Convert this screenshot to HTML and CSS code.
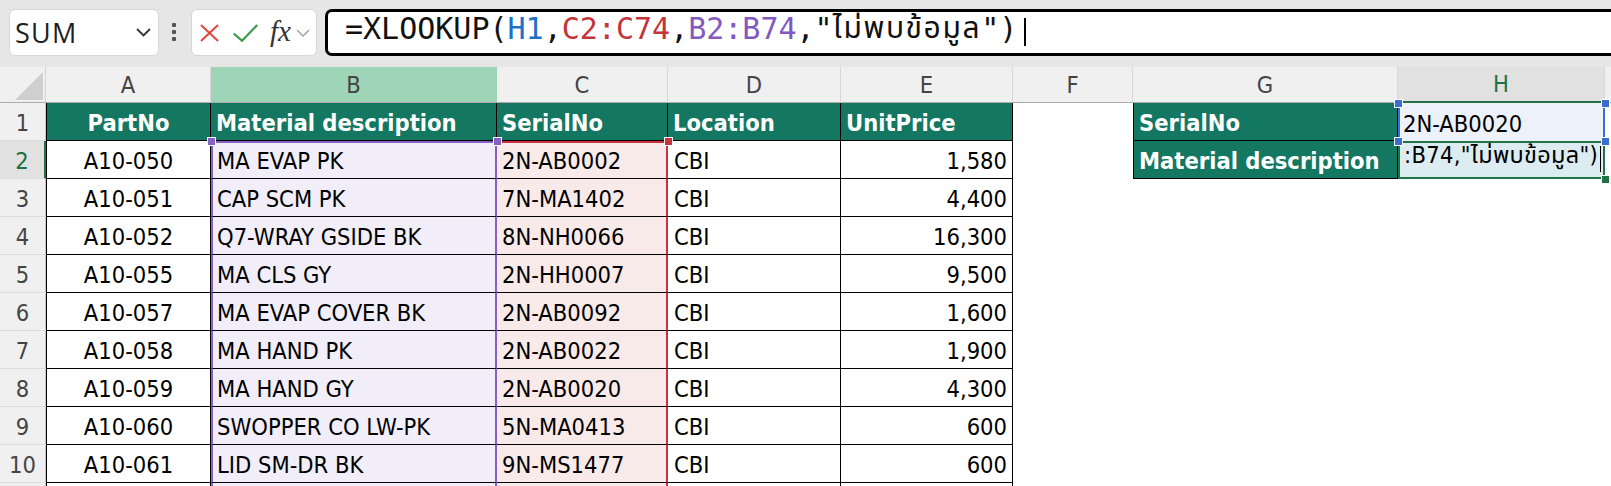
FILE: index.html
```html
<!DOCTYPE html>
<html lang="th">
<head>
<meta charset="utf-8">
<title>XLOOKUP</title>
<link rel="stylesheet" href="styles.css">
</head>
<body>
<div class="toolbar">
  <div class="namebox">
    <span class="nb-text">SUM</span>
    <svg class="nb-chev" width="15" height="9" viewBox="0 0 15 9"><polyline points="1,1 7.5,7.5 14,1" fill="none" stroke="#333" stroke-width="1.8"/></svg>
  </div>
  <div class="grip"><i></i><i></i><i></i></div>
  <div class="fxbox">
    <svg class="ic-x" width="19" height="18" viewBox="0 0 19 18"><line x1="1" y1="1" x2="18" y2="17" stroke="#e0483f" stroke-width="2"/><line x1="18" y1="1" x2="1" y2="17" stroke="#e0483f" stroke-width="2"/></svg>
    <svg class="ic-ok" width="25" height="18" viewBox="0 0 25 18"><polyline points="0.8,9.5 9,16.8 24.2,1" fill="none" stroke="#3a9b4c" stroke-width="2.2"/></svg>
    <span class="fx">fx</span>
    <svg class="fx-chev" width="14" height="8" viewBox="0 0 14 8"><polyline points="1,1 7,7 13,1" fill="none" stroke="#a3a3a3" stroke-width="1.5"/></svg>
  </div>
  <div class="formula">
    <span class="f-plain">=XLOOKUP(</span><span class="ref-h">H1</span><span class="f-plain">,</span><span class="ref-c">C2:C74</span><span class="f-plain">,</span><span class="ref-b">B2:B74</span><span class="f-plain">,"</span><span class="f-thai">ไม่พบข้อมูล</span><span class="f-plain">")</span><span class="caret"></span>
  </div>
</div>

<div class="sheet">
  <!-- column headers -->
  <div class="corner"><svg width="46" height="36" viewBox="0 0 46 36"><polygon points="43,5 43,33 15,33" fill="#cfcfcf"/></svg></div>
  <div class="ch">A</div>
  <div class="ch ch-b">B</div>
  <div class="ch">C</div>
  <div class="ch">D</div>
  <div class="ch">E</div>
  <div class="ch">F</div>
  <div class="ch">G</div>
  <div class="ch ch-act">H</div>
  <div class="ch ch-end"></div>

  <!-- row 1 -->
  <div class="rh">1</div>
  <div class="c a hd">PartNo</div>
  <div class="c hd">Material description</div>
  <div class="c hd">SerialNo</div>
  <div class="c hd">Location</div>
  <div class="c hd">UnitPrice</div>
  <div class="x"></div>
  <div class="c g hd">SerialNo</div>
  <div class="c h1">2N-AB0020</div>
  <div class="x"></div>

  <!-- row 2 -->
  <div class="rh rh-act">2</div>
  <div class="c a">A10-050</div>
  <div class="c b top">MA EVAP PK</div>
  <div class="c cc top">2N-AB0002</div>
  <div class="c d">CBI</div>
  <div class="c e">1,580</div>
  <div class="x"></div>
  <div class="c g hd">Material description</div>
  <div class="c h2"><span class="h2-text">:B74,"ไม่พบข้อมูล")</span><span class="h2-caret"></span></div>
  <div class="x"></div>

  <!-- row 3 -->
  <div class="rh">3</div>
  <div class="c a">A10-051</div>
  <div class="c b">CAP SCM PK</div>
  <div class="c cc">7N-MA1402</div>
  <div class="c d">CBI</div>
  <div class="c e">4,400</div>
  <div class="x"></div><div class="x"></div><div class="x"></div><div class="x"></div>

  <!-- row 4 -->
  <div class="rh">4</div>
  <div class="c a">A10-052</div>
  <div class="c b">Q7-WRAY GSIDE BK</div>
  <div class="c cc">8N-NH0066</div>
  <div class="c d">CBI</div>
  <div class="c e">16,300</div>
  <div class="x"></div><div class="x"></div><div class="x"></div><div class="x"></div>

  <!-- row 5 -->
  <div class="rh">5</div>
  <div class="c a">A10-055</div>
  <div class="c b">MA CLS GY</div>
  <div class="c cc">2N-HH0007</div>
  <div class="c d">CBI</div>
  <div class="c e">9,500</div>
  <div class="x"></div><div class="x"></div><div class="x"></div><div class="x"></div>

  <!-- row 6 -->
  <div class="rh">6</div>
  <div class="c a">A10-057</div>
  <div class="c b">MA EVAP COVER BK</div>
  <div class="c cc">2N-AB0092</div>
  <div class="c d">CBI</div>
  <div class="c e">1,600</div>
  <div class="x"></div><div class="x"></div><div class="x"></div><div class="x"></div>

  <!-- row 7 -->
  <div class="rh">7</div>
  <div class="c a">A10-058</div>
  <div class="c b">MA HAND PK</div>
  <div class="c cc">2N-AB0022</div>
  <div class="c d">CBI</div>
  <div class="c e">1,900</div>
  <div class="x"></div><div class="x"></div><div class="x"></div><div class="x"></div>

  <!-- row 8 -->
  <div class="rh">8</div>
  <div class="c a">A10-059</div>
  <div class="c b">MA HAND GY</div>
  <div class="c cc">2N-AB0020</div>
  <div class="c d">CBI</div>
  <div class="c e">4,300</div>
  <div class="x"></div><div class="x"></div><div class="x"></div><div class="x"></div>

  <!-- row 9 -->
  <div class="rh">9</div>
  <div class="c a">A10-060</div>
  <div class="c b">SWOPPER CO LW-PK</div>
  <div class="c cc">5N-MA0413</div>
  <div class="c d">CBI</div>
  <div class="c e">600</div>
  <div class="x"></div><div class="x"></div><div class="x"></div><div class="x"></div>

  <!-- row 10 -->
  <div class="rh">10</div>
  <div class="c a">A10-061</div>
  <div class="c b">LID SM-DR BK</div>
  <div class="c cc">9N-MS1477</div>
  <div class="c d">CBI</div>
  <div class="c e">600</div>
  <div class="x"></div><div class="x"></div><div class="x"></div><div class="x"></div>

  <!-- row 11 (only its top edge is in view) -->
  <div class="rh rh-cut"></div>
  <div class="c a cut"></div>
  <div class="c b cut"></div>
  <div class="c cc cut"></div>
  <div class="c d cut"></div>
  <div class="c e cut"></div>
  <div class="x"></div><div class="x"></div><div class="x"></div><div class="x"></div>

  <!-- selection handles (overlay) -->
  <span class="hdl hdl-p hdl-b2l"></span>
  <span class="hdl hdl-p hdl-b2r"></span>
  <span class="hdl hdl-r hdl-c2r"></span>
  <span class="hdl hdl-bl hdl-h1tl"></span>
  <span class="hdl hdl-bl hdl-h1tr"></span>
  <span class="hdl hdl-bl hdl-h1bl"></span>
  <span class="hdl hdl-bl hdl-h1br"></span>
  <span class="hdl hdl-g hdl-h2br"></span>
</div>
</body>
</html>
```

FILE: styles.css
```css
* { box-sizing: border-box; }
html, body { margin: 0; padding: 0; }
body {
  width: 1611px;
  height: 486px;
  overflow: hidden;
  background: #ffffff;
  font-family: "DejaVu Sans Condensed", "DejaVu Sans", "Noto Sans Thai", "Noto Sans", sans-serif;
  font-stretch: condensed;
}

/* ---------- toolbar ---------- */
.toolbar {
  height: 67px;
  background: #e6e6e6;
  display: flex;
  align-items: flex-start;
  padding: 9px 0 0 9px;
}
.namebox {
  width: 150px;
  height: 47px;
  background: #fff;
  border: 1px solid #d6d6d6;
  border-radius: 6px;
  display: flex;
  align-items: center;
  justify-content: space-between;
  padding: 0 7px 0 5px;
}
.nb-text {
  font-family: "Open Sans", "Noto Sans", sans-serif;
  font-stretch: normal;
  font-size: 27px;
  color: #1e1e1e;
  letter-spacing: 1.2px;
}
.grip {
  width: 4px;
  margin: 14px 15px 0 13px;
  display: flex;
  flex-direction: column;
  gap: 3px;
}
.grip i {
  display: block;
  width: 4px;
  height: 4px;
  border-radius: 1px;
  background: #555;
}
.fxbox {
  width: 126px;
  height: 47px;
  background: #fff;
  border: 1px solid #d6d6d6;
  border-radius: 6px;
  display: flex;
  align-items: center;
  padding-left: 8px;
}
.ic-x { display: block; }
.ic-ok { display: block; margin-left: 14px; }
.fx {
  margin-left: 12px;
  font-family: "Liberation Serif", serif;
  font-stretch: normal;
  font-style: italic;
  font-size: 29px;
  color: #333;
  line-height: 1;
  margin-top: -3px;
}
.fx-chev { display: block; margin-left: 5px; }
.formula {
  flex: 1;
  height: 47px;
  margin-left: 8px;
  margin-right: -30px;
  background: #fff;
  border: 3px solid #000;
  border-radius: 7px;
  display: flex;
  align-items: center;
  padding: 0 0 8px 17px;
  font-family: "DejaVu Sans Mono", "Noto Sans Thai", monospace;
  font-stretch: normal;
  font-size: 30px;
  white-space: nowrap;
  color: #111;
}
.ref-h { color: #1d6fca; }
.ref-c { color: #c4343b; }
.ref-b { color: #8159c1; }
.f-thai { letter-spacing: 1.6px; }
.caret {
  display: inline-block;
  width: 2px;
  height: 28px;
  background: #000;
  margin-left: 7px;
  margin-top: 6px;
}

/* ---------- sheet ---------- */
.sheet {
  position: relative;
  display: grid;
  grid-template-columns: 46px 165px 286px 171px 173px 172px 120px 265px 207px 6px;
  grid-template-rows: 36px repeat(10, 38px) 3px;
  font-size: 23.5px;
}
.corner {
  background: #f0f0f0;
  border-right: 1px solid #d4d4d4;
  border-bottom: 1px solid #ababab;
}
.corner svg { display: block; }
.ch {
  background: #f0f0f0;
  border-right: 1px solid #d8d8d8;
  border-bottom: 1px solid #ababab;
  color: #444;
  display: flex;
  align-items: flex-end;
  justify-content: center;
  padding-bottom: 3px;
}
.ch-b { background: #9fd5b7; border-right-color: #9fd5b7; }
.ch-act {
  background: #e1e1e1;
  color: #1e7145;
  border-bottom: 2px solid #217346;
}
.ch-end { border-right: none; }

.rh {
  background: #f0f0f0;
  border-right: 1px solid #c9c9c9;
  border-bottom: 1px solid #dcdcdc;
  color: #444;
  display: flex;
  align-items: flex-end;
  justify-content: center;
  padding-bottom: 3px;
}
.rh-act {
  background: #e1e1e1;
  color: #1e7145;
  border-right: 2px solid #217346;
}
.rh-cut { border-bottom: none; padding: 0; }

.c {
  display: flex;
  align-items: flex-end;
  padding: 0 5px 3px 5px;
  white-space: nowrap;
  overflow: hidden;
  color: #000;
  border-right: 1px solid #000;
  border-bottom: 1px solid #000;
}
.c.cut { border-bottom: none; padding: 0; }
.hd {
  background: #137762;
  color: #fff;
  font-weight: bold;
}
.a { border-left: 1px solid #000; justify-content: center; }
.b {
  background: #f1eef9;
  border-left: 2px solid #8760c4;
  border-right: 2px solid #8760c4;
  padding-left: 4px;
}
.b.top { border-top: 2px solid #8760c4; }
.cc {
  background: #f9eaea;
  border-right: 2px solid #c9343c;
}
.cc.top { border-top: 2px solid #c9343c; }
.d { padding-left: 6px; }
.e { justify-content: flex-end; }
.g { border-left: 1px solid #000; }
.x { background: #fff; }

.h1 {
  background: #edf1fa;
  border-left: 2px solid #3a6fd0;
  border-right: 2px solid #3a6fd0;
  border-bottom: none;
  padding-left: 3px;
}
.h2 {
  background: #dcecf1;
  border: 2px solid #217346;
  padding-left: 2px;
  padding-right: 2px;
  justify-content: flex-end;
}
.h2-text { flex: none; letter-spacing: 0.3px; }
.h2-caret {
  flex: none;
  width: 1px;
  height: 26px;
  background: #000;
  margin-left: 2px;
  align-self: center;
}

/* selection handles */
.hdl {
  position: absolute;
  width: 9px;
  height: 9px;
  border: 1px solid #fff;
  margin: -4px 0 0 -4px;
}
.hdl-p { background: #8760c4; }
.hdl-r { background: #c9343c; }
.hdl-bl { background: #3a6fd0; }
.hdl-g { background: #217346; }
.hdl-b2l { left: 211px; top: 74px; }
.hdl-b2r { left: 497px; top: 74px; }
.hdl-c2r { left: 668px; top: 74px; }
.hdl-h1tl { left: 1398px; top: 36px; }
.hdl-h1tr { left: 1605px; top: 36px; }
.hdl-h1bl { left: 1398px; top: 74px; }
.hdl-h1br { left: 1605px; top: 74px; }
.hdl-h2br { left: 1605px; top: 112px; }
```
